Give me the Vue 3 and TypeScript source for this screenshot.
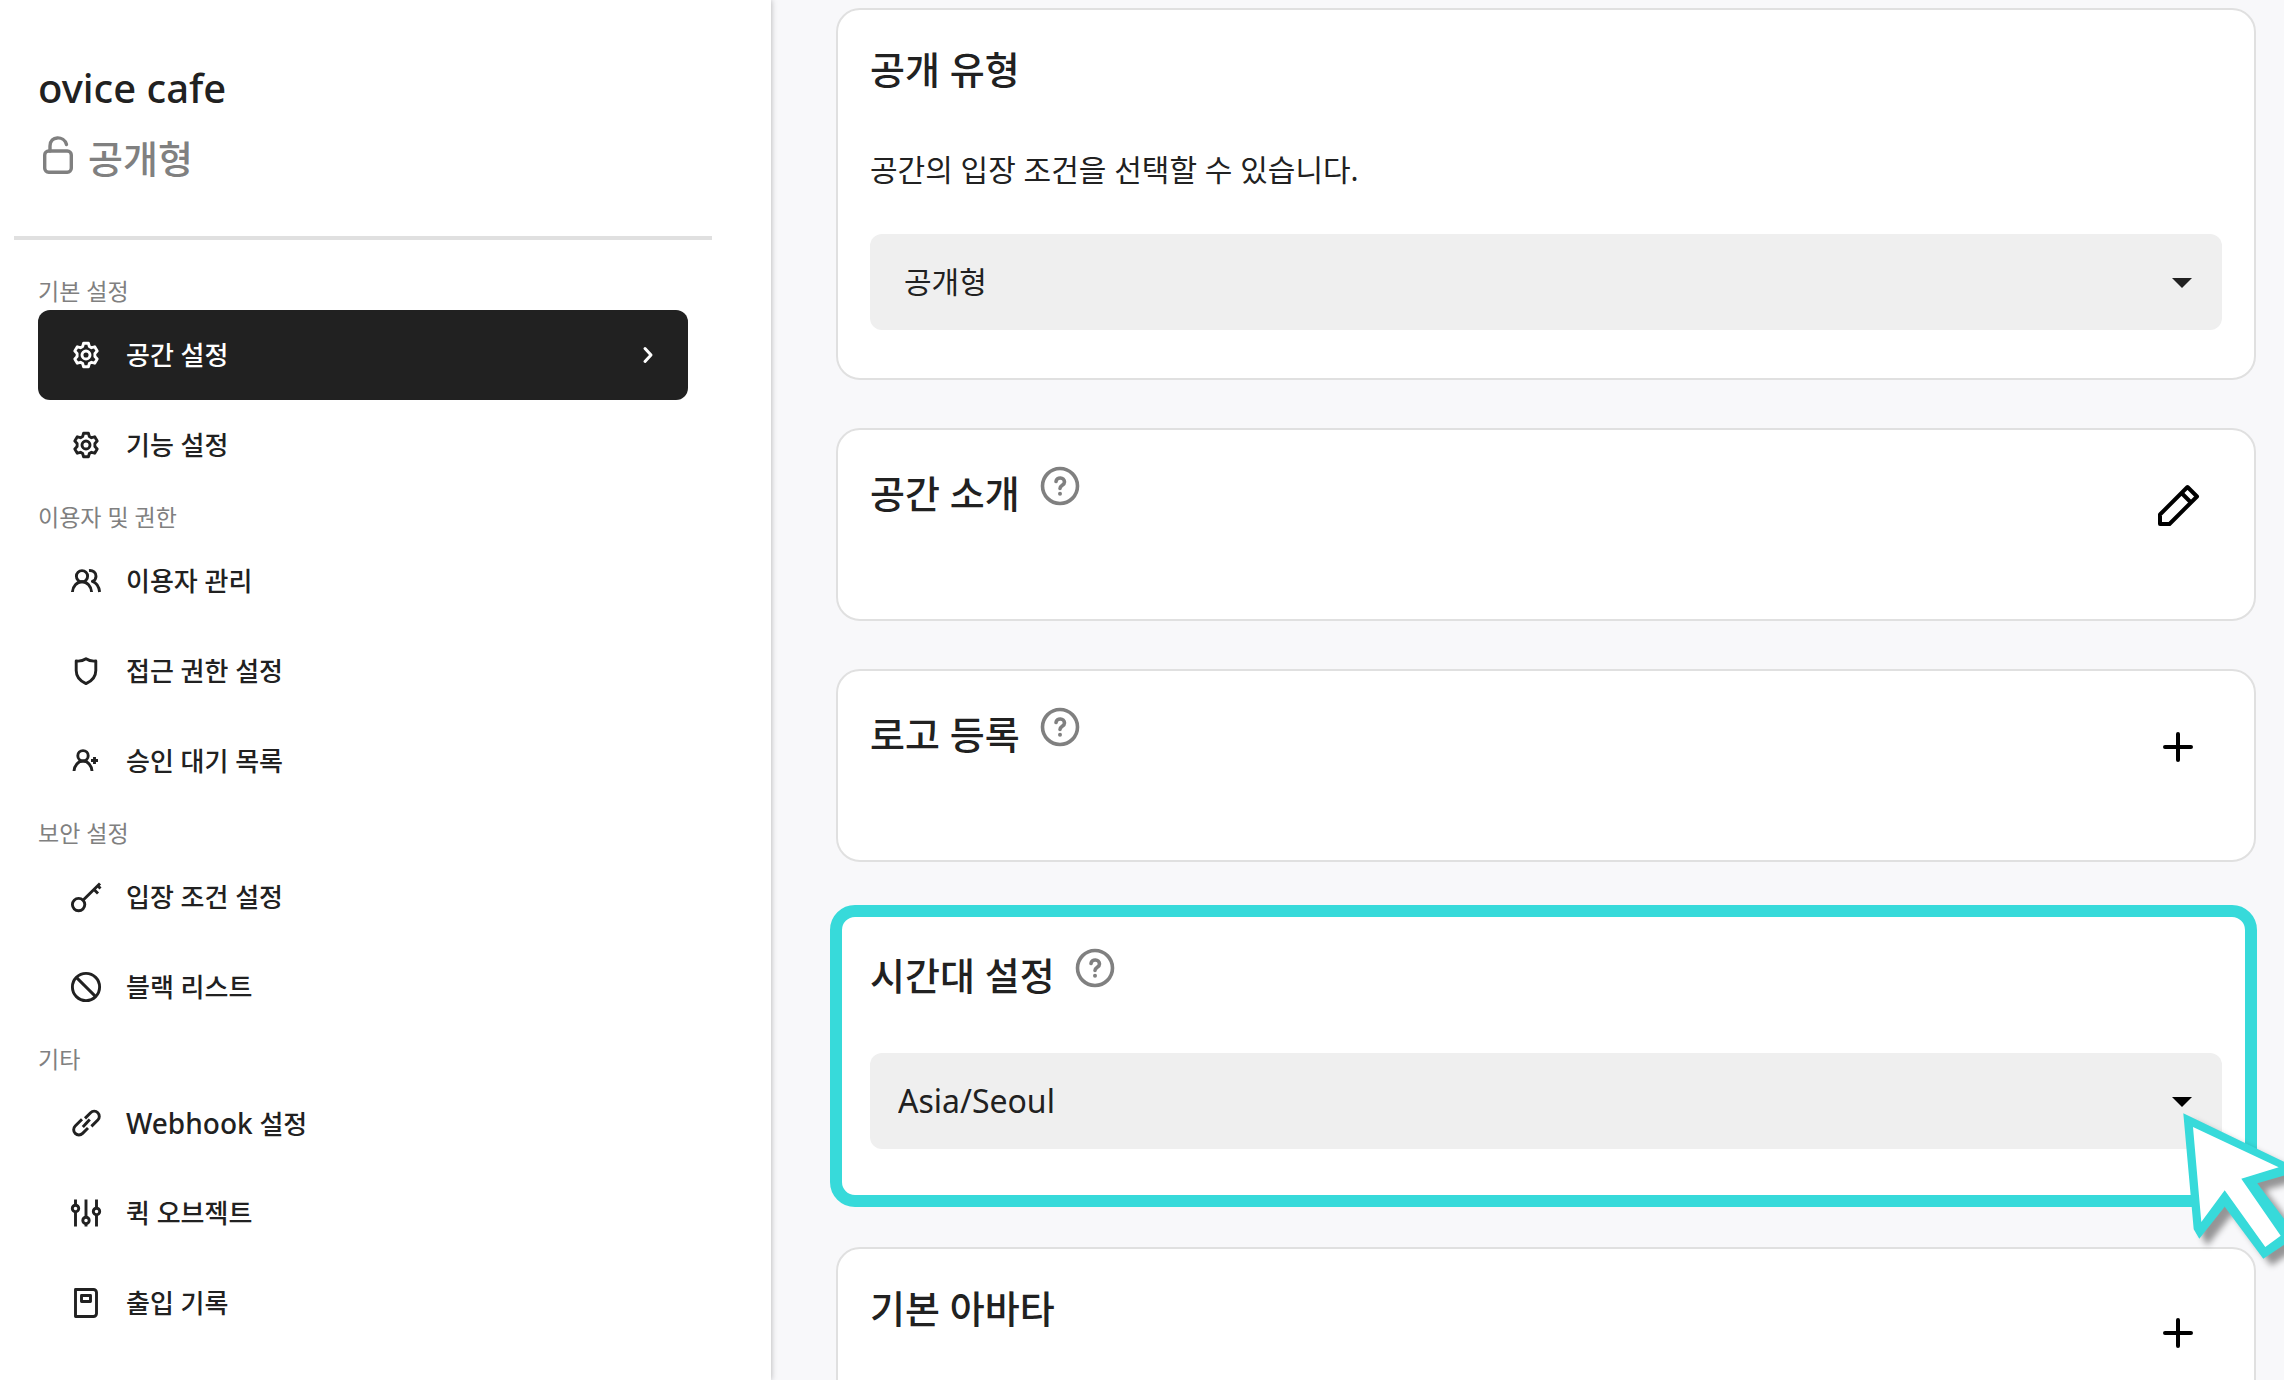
<script setup lang="ts">
import { ref } from 'vue'

type IconName =
  | 'gear' | 'users' | 'shield' | 'userPlus' | 'key'
  | 'ban' | 'link' | 'sliders' | 'book'

interface NavItem { icon: IconName; label: string; latin?: string }
interface NavGroup { title: string; items: NavItem[] }

const groups: NavGroup[] = [
  {
    title: '기본 설정',
    items: [
      { icon: 'gear', label: '공간 설정' },
      { icon: 'gear', label: '기능 설정' },
    ],
  },
  {
    title: '이용자 및 권한',
    items: [
      { icon: 'users', label: '이용자 관리' },
      { icon: 'shield', label: '접근 권한 설정' },
      { icon: 'userPlus', label: '승인 대기 목록' },
    ],
  },
  {
    title: '보안 설정',
    items: [
      { icon: 'key', label: '입장 조건 설정' },
      { icon: 'ban', label: '블랙 리스트' },
    ],
  },
  {
    title: '기타',
    items: [
      { icon: 'link', latin: 'Webhook', label: ' 설정' },
      { icon: 'sliders', label: '퀵 오브젝트' },
      { icon: 'book', label: '출입 기록' },
    ],
  },
]

const icons: Record<IconName, string[]> = {
  gear: [
    'M13.6 4.2h4.8l.9 3.2 2.2 1.3 3.2-.9 2.5 4.2-2.3 2.4v3.2l2.3 2.4-2.5 4.2-3.2-.9-2.2 1.3-.9 3.2h-4.8l-.9-3.2-2.2-1.3-3.2.9-2.5-4.2 2.3-2.4v-3.2l-2.3-2.4 2.500-4.200 3.200.9 2.200-1.300z',
    'M16 12a4 4 0 1 0 0 8 4 4 0 1 0 0-8z',
  ],
  users: [
    'M12 5.600a5.600 5.600 0 1 0 0 11.200 5.600 5.600 0 1 0 0-11.200z',
    'M2.400 27c.4-5.600 4.400-10.200 9.600-10.200S21.200 21.400 21.600 27',
    'M19 5.600c4.200-.4 7 2.200 7 5.600 0 2.600-1.600 4.400-3.600 5.200 4 1.400 6.600 5.600 7.200 10.600',
  ],
  shield: [
    'M16 3.800c-3 2-6.200 2.600-9.800 2.200v9.400c0 6.200 3.600 10.400 9.800 13.200 6.200-2.800 9.800-7 9.800-13.200V6c-3.600.4-6.800-.2-9.800-2.200z',
  ],
  userPlus: [
    'M13 5.600a5.200 5.200 0 1 0 0 10.400 5.200 5.200 0 1 0 0-10.400z',
    'M4 26c.4-5.400 4.200-10 9-10s8.600 4.600 9 10',
    'M24.500 12v7M21 15.500h7',
  ],
  key: [
    'M8.600 17.400a6.200 6.200 0 1 0 0 12.400 6.200 6.200 0 1 0 0-12.400z',
    'M13 19.200 30 2.500M24.500 9l3.500 3.500M28 5l2.500 2.500',
  ],
  ban: [
    'M16 2.400a13.600 13.600 0 1 0 0 27.200 13.600 13.600 0 1 0 0-27.200z',
    'M6.600 6.600l18.800 18.800',
  ],
  link: [
    'M15 11.400l5.600-5.600a5 5 0 0 1 7.200 7.200l-6.400 6.400',
    'M12 12.200l-6.800 6.800a5 5 0 0 0 7.400 7.400l5.400-5.400',
    'M12.800 20l7-7.600',
  ],
  sliders: [
    'M5.500 2.500V8M5.500 14.500V29.500M16 2.500V20M16 26.500V29.500M26.500 2.500V11M26.500 17.500V29.500',
    'M5.500 8.200a3.200 3.200 0 1 0 0 6.400 3.200 3.200 0 1 0 0-6.400z',
    'M16 20.200a3.200 3.200 0 1 0 0 6.400 3.200 3.200 0 1 0 0-6.400z',
    'M26.500 11.200a3.200 3.200 0 1 0 0 6.400 3.200 3.200 0 1 0 0-6.400z',
  ],
  book: [
    'M5.500 2.500H23.500a3 3 0 0 1 3 3V26.500a3 3 0 0 1-3 3H5.500z',
    'M11.500 8.500h9v6h-9z',
  ],
}

const active = ref('공간 설정')
const access = ref('공개형')
const timezone = ref('Asia/Seoul')
</script>

<template>
  <div class="shell">
    <aside class="sidebar">
      <header class="space">
        <h1 class="space-name">ovice cafe</h1>
        <p class="space-status">
          <svg class="lock" viewBox="0 0 40 40" aria-hidden="true">
            <rect x="6.700" y="15" width="26.600" height="21.300" rx="4" />
            <path d="M12 15V10C12-.5 26-.5 28.500 8.500" />
          </svg>
          <span class="status-text">공개형</span>
        </p>
      </header>

      <nav class="nav">
        <section v-for="group in groups" :key="group.title">
          <h2 class="group-title">{{ group.title }}</h2>
          <ul class="group-list">
            <li v-for="item in group.items" :key="item.label">
              <a
                href="#"
                class="nav-link"
                :class="{ active: active === item.label }"
                @click.prevent="active = item.label"
              >
                <svg class="nav-icon" viewBox="0 0 32 32" aria-hidden="true">
                  <path v-for="d in icons[item.icon]" :key="d" :d="d" />
                </svg>
                <span class="nav-label"><span v-if="item.latin" class="latin">{{ item.latin }}</span>{{ item.label }}</span>
                <svg v-if="active === item.label" class="chevron" viewBox="0 0 24 24" aria-hidden="true">
                  <path d="M9 5.500l6 6.500-6 6.500" />
                </svg>
              </a>
            </li>
          </ul>
        </section>
      </nav>
    </aside>

    <main class="content">
      <section class="card">
        <div class="card-head">
          <h2 class="card-title">공개 유형</h2>
        </div>
        <p class="card-text">공간의 입장 조건을 선택할 수 있습니다.</p>
        <div class="field">
          <select v-model="access" class="select" aria-label="공개 유형">
            <option>공개형</option>
          </select>
          <svg class="caret" viewBox="0 0 48 48" aria-hidden="true"><path d="M14 20h20L24 30z" /></svg>
        </div>
      </section>

      <section class="card compact">
        <div class="card-head">
          <h2 class="card-title with-help">공간 소개</h2>
          <button type="button" class="help" aria-label="공간 소개 도움말">
            <svg viewBox="0 0 48 48"><circle cx="24" cy="24" r="17.500" /><path d="M20 19.500c.5-5 8.500-4.500 8.500.5 0 3.500-4.500 3-4.500 6.500" /><path class="dot" d="M24 31.700v.1" /></svg>
          </button>
          <button type="button" class="action" aria-label="공간 소개 편집">
            <svg viewBox="0 0 48 48"><path d="M6 42V32.500L33.500 5l9.500 9.500L15.500 42zM27.500 11l9.500 9.500" /></svg>
          </button>
        </div>
      </section>

      <section class="card compact">
        <div class="card-head">
          <h2 class="card-title with-help">로고 등록</h2>
          <button type="button" class="help" aria-label="로고 등록 도움말">
            <svg viewBox="0 0 48 48"><circle cx="24" cy="24" r="17.500" /><path d="M20 19.500c.5-5 8.500-4.500 8.500.5 0 3.500-4.500 3-4.500 6.500" /><path class="dot" d="M24 31.700v.1" /></svg>
          </button>
          <button type="button" class="action" aria-label="로고 추가">
            <svg viewBox="0 0 48 48"><path class="plus" d="M24 11v26M11 24h26" /></svg>
          </button>
        </div>
      </section>

      <section class="card highlighted">
        <div class="card-head">
          <h2 class="card-title with-help">시간대 설정</h2>
          <button type="button" class="help" aria-label="시간대 설정 도움말">
            <svg viewBox="0 0 48 48"><circle cx="24" cy="24" r="17.500" /><path d="M20 19.500c.5-5 8.500-4.500 8.500.5 0 3.500-4.500 3-4.500 6.500" /><path class="dot" d="M24 31.700v.1" /></svg>
          </button>
        </div>
        <div class="field spaced">
          <select v-model="timezone" class="select zone" aria-label="시간대 설정">
            <option>Asia/Seoul</option>
          </select>
          <svg class="caret dark" viewBox="0 0 48 48" aria-hidden="true"><path d="M14 20h20L24 30z" /></svg>
        </div>
        <svg class="pointer" viewBox="0 0 130 170" aria-hidden="true">
          <path class="pointer-edge" d="M3.300 3.300 122 60.500 77.300 73.300 117 126 83.300 148.700 44.700 96.700 19.300 128.700 13.700 119.300z" />
          <path class="pointer-face" d="M13 17 98.700 57.300 61.300 68.700 100.700 125.700 85.300 137 44.700 80.300 21.300 112z" />
        </svg>
      </section>

      <section class="card avatar">
        <div class="card-head">
          <h2 class="card-title">기본 아바타</h2>
          <button type="button" class="action" aria-label="아바타 추가">
            <svg viewBox="0 0 48 48"><path class="plus" d="M24 11v26M11 24h26" /></svg>
          </button>
        </div>
      </section>
    </main>
  </div>
</template>

<style>
body {
  margin: 0;
}
</style>

<style scoped>
.shell {
  display: flex;
  height: 100vh;
  overflow: hidden;
  background: #f8f8fa;
  color: #212121;
  font-family: 'Noto Sans', 'Noto Sans CJK KR', sans-serif;
}

h1,
h2,
p,
ul {
  margin: 0;
  padding: 0;
}

button {
  padding: 0;
  border: 0;
  background: none;
  cursor: pointer;
}

svg {
  display: block;
  flex: none;
  fill: none;
  stroke: currentColor;
}

.sidebar {
  flex: none;
  box-sizing: border-box;
  width: 771px;
  background: #fff;
  box-shadow: 0 0 6px rgba(0, 0, 0, 0.3);
}

.space {
  box-sizing: border-box;
  height: 240px;
  margin: 0 59px 0 14px;
  padding: 60px 24px 0;
  border-bottom: 4px solid #e0e0e0;
}

.space-name {
  font-size: 40px;
  font-weight: 500;
  line-height: 56px;
}

.space-status {
  display: flex;
  align-items: center;
  gap: 10px;
  height: 80px;
  color: #808080;
  font-size: 38px;
  font-weight: 500;
  line-height: 56px;
}

.status-text {
  padding-top: 4px;
}

.lock {
  width: 40px;
  height: 40px;
  stroke-width: 3.4;
  stroke-linecap: round;
}

.nav {
  padding: 24px 83px 0 38px;
}

.group-title {
  height: 36px;
  padding-top: 10px;
  color: #808080;
  font-size: 23px;
  font-weight: 400;
  line-height: 34px;
}

.group-list {
  list-style: none;
}

.nav-link {
  display: flex;
  align-items: center;
  gap: 24px;
  height: 90px;
  box-sizing: border-box;
  padding: 0 28px 0 32px;
  border-radius: 12px;
  color: #212121;
  font-size: 26px;
  font-weight: 500;
  line-height: 40px;
  text-decoration: none;
}

.nav-link.active {
  background: #212121;
  color: #fff;
}

.nav-icon {
  width: 32px;
  height: 32px;
  stroke-width: 2.9;
  stroke-linejoin: round;
}

.nav-label {
  flex: 1;
}

.latin {
  font-size: 28px;
}

.chevron {
  width: 24px;
  height: 24px;
  stroke-width: 3;
  stroke-linecap: round;
  stroke-linejoin: round;
}

.content {
  flex: 1;
  display: flex;
  flex-direction: column;
  gap: 48px;
  min-width: 0;
  overflow: hidden;
  padding: 8px 28px 0 65px;
}

.card {
  position: relative;
  flex: none;
  box-sizing: border-box;
  padding: 32px 32px 48px;
  border: 2px solid #e0e0e0;
  border-radius: 24px;
  background: #fff;
}

.card.compact {
  height: 193px;
}

.card.avatar {
  min-height: 193px;
}

.card-head {
  display: flex;
  align-items: flex-start;
}

.card-title {
  font-size: 38px;
  font-weight: 500;
  line-height: 54px;
}

.card-title.with-help {
  padding-top: 4px;
}

.help {
  width: 48px;
  height: 48px;
  margin-left: 16px;
  color: #808080;
}

.help svg {
  width: 48px;
  height: 48px;
  stroke-width: 3.6;
  stroke-linecap: round;
}

.help .dot {
  stroke-width: 4;
}

.action {
  display: grid;
  place-items: center;
  width: 88px;
  height: 88px;
  margin-left: auto;
  color: #000;
}

.avatar .action {
  margin-top: 8px;
}

.action svg {
  width: 48px;
  height: 48px;
  stroke-width: 4;
  stroke-linejoin: round;
}

.action .plus {
  stroke-linecap: round;
}

.card-text {
  margin: 50px 0 40px;
  font-size: 30px;
  line-height: 48px;
}

.field {
  position: relative;
}

.field.spaced {
  margin-top: 51px;
}

.select {
  display: block;
  width: 100%;
  height: 96px;
  padding: 0 72px 2px 34px;
  border: 0;
  border-radius: 12px;
  background: #efefef;
  color: #212121;
  font-family: inherit;
  font-size: 30px;
  appearance: none;
}

.select.zone {
  padding-left: 28px;
  font-size: 32px;
}

.caret {
  position: absolute;
  top: 24px;
  right: 16px;
  width: 48px;
  height: 48px;
  fill: #212121;
  stroke: none;
  pointer-events: none;
}

.caret.dark {
  fill: #000;
}

.highlighted {
  z-index: 1;
}

.highlighted::after {
  content: '';
  position: absolute;
  inset: -7px -3px -10px -8px;
  border: 12px solid #37dada;
  border-radius: 25px;
  pointer-events: none;
}

.pointer {
  position: absolute;
  top: 198px;
  right: -56px;
  z-index: 1;
  width: 130px;
  height: 170px;
  stroke: none;
  filter: drop-shadow(8px 7px 3px rgba(0, 0, 0, 0.4));
  pointer-events: none;
}

.pointer-edge {
  fill: #37dada;
}

.pointer-face {
  fill: #fff;
}
</style>
